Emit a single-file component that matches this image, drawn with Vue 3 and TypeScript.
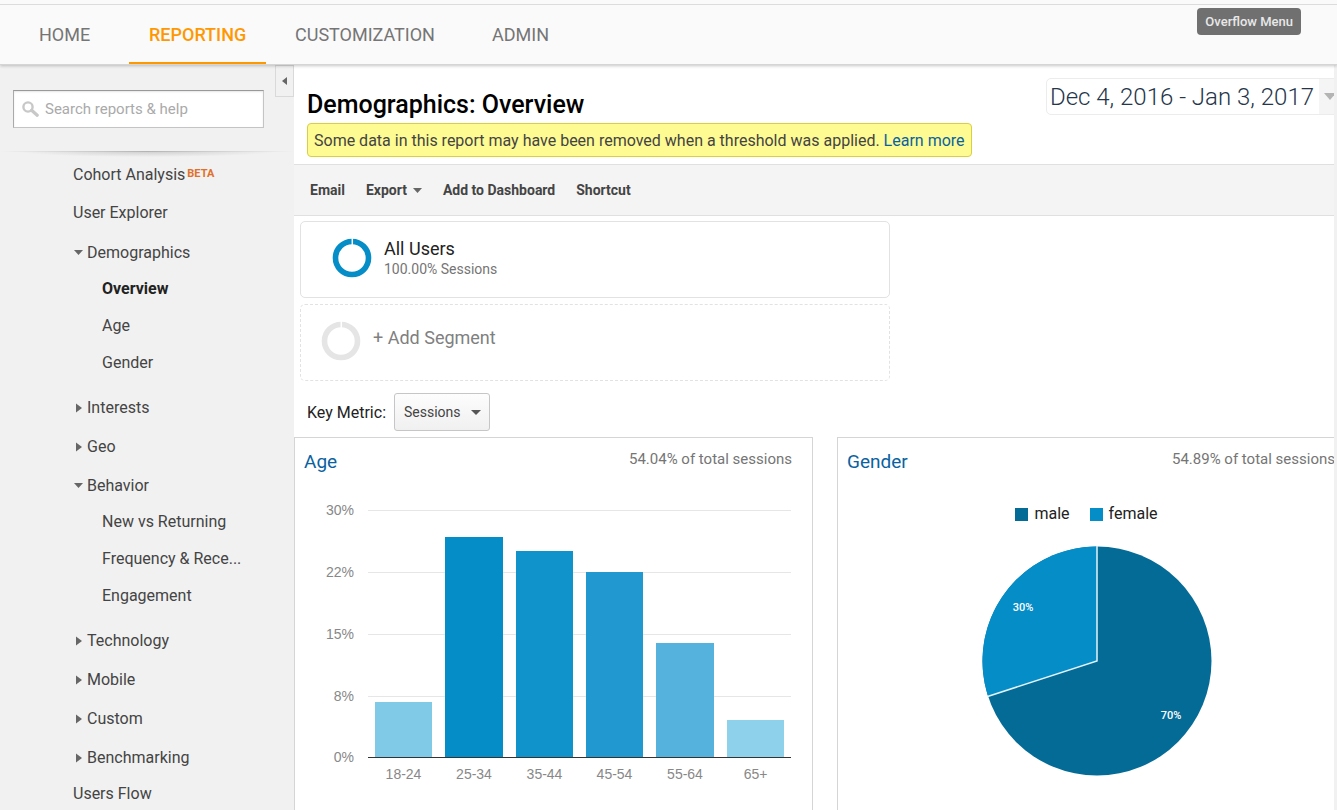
<script setup lang="ts">
import { ref } from 'vue'

interface NavItem {
  label: string
  badge?: string
  group?: boolean
  children?: string[]
}

const tabs = ['HOME', 'REPORTING', 'CUSTOMIZATION', 'ADMIN']
const activeTab = ref('REPORTING')
const activeReport = ref('Overview')
const query = ref('')
const metric = ref('Sessions')

const navItems: NavItem[] = [
  { label: 'Cohort Analysis', badge: 'BETA' },
  { label: 'User Explorer' },
  { label: 'Demographics', group: true, children: ['Overview', 'Age', 'Gender'] },
  { label: 'Interests', group: true },
  { label: 'Geo', group: true },
  { label: 'Behavior', group: true, children: ['New vs Returning', 'Frequency & Rece...', 'Engagement'] },
  { label: 'Technology', group: true },
  { label: 'Mobile', group: true },
  { label: 'Custom', group: true },
  { label: 'Benchmarking', group: true },
  { label: 'Users Flow' },
]

const ticks = [
  { label: '30%', y: 20 },
  { label: '22%', y: 82 },
  { label: '15%', y: 144 },
  { label: '8%', y: 206 },
  { label: '0%', y: 267 },
]

const bars = [
  { label: '18-24', x: 80, w: 57, top: 212, fill: '#81cae7' },
  { label: '25-34', x: 150, w: 58, top: 47, fill: '#058dc7' },
  { label: '35-44', x: 221, w: 57, top: 61, fill: '#1092cb' },
  { label: '45-54', x: 291, w: 57, top: 82, fill: '#2198cf' },
  { label: '55-64', x: 361, w: 58, top: 153, fill: '#55b2dc' },
  { label: '65+', x: 432, w: 57, top: 230, fill: '#8dd1eb' },
]
</script>

<template>
  <div class="page">
    <header class="topbar">
      <nav class="tabs">
        <a v-for="t in tabs" :key="t" href="#" class="tab" :class="{ active: t === activeTab }" @click.prevent="activeTab = t">{{ t }}</a>
      </nav>
      <span class="overflow-tip">Overflow Menu</span>
    </header>

    <div class="body">
      <aside class="sidebar">
        <button class="collapse" type="button" aria-label="Collapse navigation">
          <svg width="5" height="8" viewBox="0 0 5 8"><path d="M5 0v8L0 4z" fill="#666" /></svg>
        </button>
        <label class="search">
          <svg width="17" height="16" viewBox="0 0 17 16" aria-hidden="true">
            <circle cx="6" cy="6" r="4.6" fill="none" stroke="#c8c8c8" stroke-width="2.4" />
            <path d="M9.6 9.2l5.6 5" stroke="#c8c8c8" stroke-width="3.2" stroke-linecap="round" />
          </svg>
          <input v-model="query" type="text" placeholder="Search reports &amp; help" aria-label="Search reports &amp; help" />
        </label>
        <div class="divider"></div>
        <ul class="nav">
          <li v-for="item in navItems" :key="item.label" :class="item.group ? 'group' : 'leaf'">
            <a href="#" class="nav-link">
              <svg v-if="item.group && item.children" class="arrow" width="13" height="10" viewBox="0 0 13 10"><path d="M1 2h9L5.500 7z" fill="#666" /></svg>
              <svg v-else-if="item.group" class="arrow" width="13" height="10" viewBox="0 0 13 10"><path d="M3 0.500v9L9 5z" fill="#666" /></svg>
              <span>{{ item.label }}</span>
              <b v-if="item.badge" class="beta">{{ item.badge }}</b>
            </a>
            <ul v-if="item.children" class="sub">
              <li v-for="c in item.children" :key="c">
                <a href="#" :class="{ current: c === activeReport }" @click.prevent="activeReport = c">{{ c }}</a>
              </li>
            </ul>
          </li>
        </ul>
      </aside>

      <main class="content">
        <section class="head">
          <div class="head-text">
            <h1>Demographics: Overview</h1>
            <p class="notice">Some data in this report may have been removed when a threshold was applied. <a href="#">Learn more</a></p>
          </div>
          <button class="dates" type="button">
            <span class="range">Dec 4, 2016 - Jan 3, 2017</span>
            <span class="date-caret"><svg width="12" height="7" viewBox="0 0 12 7"><path d="M0 0h12L6 7z" fill="#b4b4b4" /></svg></span>
          </button>
        </section>

        <div class="toolbar">
          <button type="button">Email</button>
          <button type="button">Export <svg width="9" height="5" viewBox="0 0 9 5"><path d="M0 0h9L4.500 5z" fill="#666" /></svg></button>
          <button type="button">Add to Dashboard</button>
          <button type="button">Shortcut</button>
        </div>

        <section class="segments">
          <div class="segment">
            <svg width="40" height="40" viewBox="0 0 40 40">
              <circle cx="20" cy="20" r="16.500" fill="none" stroke="#058dc7" stroke-width="5.600" />
              <path d="M20.300 0v7" stroke="#fff" stroke-width="1.500" />
            </svg>
            <div>
              <div class="seg-name">All Users</div>
              <div class="seg-sub">100.00% Sessions</div>
            </div>
          </div>
          <button type="button" class="segment add">
            <svg width="40" height="40" viewBox="0 0 40 40">
              <circle cx="20" cy="20" r="16.500" fill="none" stroke="#e5e5e5" stroke-width="5.600" />
              <path d="M20.300 0v7" stroke="#fff" stroke-width="1.500" />
            </svg>
            <span class="seg-name">+ Add Segment</span>
          </button>
        </section>

        <div class="metric">
          <label for="metric">Key Metric:</label>
          <div class="select">
            <select id="metric" v-model="metric">
              <option>Sessions</option>
            </select>
            <svg width="10" height="5" viewBox="0 0 10 5"><path d="M0 0h10L5 5z" fill="#555" /></svg>
          </div>
        </div>

        <div class="cards">
          <section class="card">
            <div class="card-head">
              <h2><a href="#">Age</a></h2>
              <span>54.04% of total sessions</span>
            </div>
            <svg class="bar-chart" viewBox="0 0 517 300" role="img" aria-label="Sessions by age">
              <rect v-for="t in ticks.slice(0, 4)" :key="t.label" x="73" :y="t.y" width="423" height="1" fill="#e6e6e6" />
              <text v-for="t in ticks" :key="'l' + t.label" x="59" :y="t.y + 5" text-anchor="end">{{ t.label }}</text>
              <g v-for="b in bars" :key="b.label">
                <rect :x="b.x" :y="b.top" :width="b.w" :height="267 - b.top" :fill="b.fill" />
                <text :x="b.x + b.w / 2" y="289" text-anchor="middle">{{ b.label }}</text>
              </g>
              <rect x="73" y="267" width="423" height="1" fill="#333" />
            </svg>
          </section>

          <section class="card">
            <div class="card-head">
              <h2><a href="#">Gender</a></h2>
              <span>54.89% of total sessions</span>
            </div>
            <div class="legend">
              <span><i class="male"></i>male</span>
              <span><i class="female"></i>female</span>
            </div>
            <svg class="pie" width="230" height="230" viewBox="0 0 230 230" role="img" aria-label="Sessions by gender">
              <circle cx="115" cy="115" r="114.500" fill="#046b96" />
              <path d="M115 115V0.500A114.500 114.500 0 0 0 6.100 150.400z" fill="#058dc7" />
              <path d="M115 0V115L5.600 150.500" fill="none" stroke="#e4f3fa" stroke-width="1.500" />
              <text x="41" y="65" text-anchor="middle">30%</text>
              <text x="189" y="173" text-anchor="middle">70%</text>
            </svg>
          </section>
        </div>
      </main>
    </div>
  </div>
</template>

<style>
body {
  margin: 0;
}
</style>

<style scoped>
.page {
  display: flex;
  flex-direction: column;
  min-height: 100vh;
  background: #f1f1f1;
  font-family: Roboto, "Liberation Sans", sans-serif;
  font-size: 16px;
  color: #222;
}
.page * {
  box-sizing: border-box;
}
a {
  color: #0a62a0;
  text-decoration: none;
}
button {
  font-family: inherit;
  cursor: pointer;
}
ul {
  list-style: none;
  margin: 0;
  padding: 0;
}

.topbar {
  position: relative;
  z-index: 2;
  height: 65px;
  padding: 4px 0 0 19px;
  background: linear-gradient(#fafafa 4px, #dcdcdc 4px, #dcdcdc 5px, #fafafa 5px);
  border-bottom: 1px solid #d5d5d5;
  box-shadow: 0 1px 3px rgba(0, 0, 0, 0.22);
}
.tabs {
  display: grid;
  grid-template-columns: 110px 146px 197px auto;
  justify-content: start;
  height: 60px;
}
.tab {
  justify-self: start;
  height: 60px;
  padding: 0 20px;
  font-size: 18px;
  line-height: 62px;
  color: #757575;
}
.tab.active {
  color: #ff9800;
  font-weight: 500;
  border-bottom: 2px solid #ff9800;
}
.overflow-tip {
  position: absolute;
  top: 8px;
  right: 36px;
  padding: 0 8px;
  border-radius: 4px;
  background: #707070;
  color: #e8e8e8;
  font-size: 13px;
  font-weight: 500;
  line-height: 27px;
}

.body {
  display: flex;
  flex: 1;
}
.sidebar {
  position: relative;
  flex: 0 0 294px;
  padding-top: 25px;
  background: #f1f1f1;
}
.collapse {
  position: absolute;
  top: 0;
  right: 0;
  display: flex;
  align-items: center;
  justify-content: center;
  width: 19px;
  height: 32px;
  padding: 0;
  border: 1px solid #d9d9d9;
  background: #f1f1f1;
}
.search {
  display: flex;
  align-items: center;
  gap: 6px;
  height: 38px;
  margin: 0 30px 0 13px;
  padding: 0 8px;
  border: 1px solid #c4c4c4;
  border-top-color: #999;
  border-left-color: #aaa;
  background: #fff;
  box-shadow: inset 0 1px 2px rgba(0, 0, 0, 0.1);
}
.search input {
  flex: 1;
  min-width: 0;
  padding: 0;
  border: 0;
  outline: 0;
  background: none;
  font-family: inherit;
  font-size: 15px;
}
.search input::placeholder {
  color: #aaa;
  opacity: 1;
}
.divider {
  height: 6px;
  margin-top: 23px;
  background:
    linear-gradient(90deg, #f1f1f1, #b4b4b4 50%, #f1f1f1) top / 100% 1px no-repeat,
    radial-gradient(ellipse 45% 100% at 50% 0, #cccccc, #f1f1f1);
}
.nav a {
  display: flex;
  align-items: center;
  color: #444;
}
.leaf {
  margin-bottom: 4px;
  padding-left: 73px;
}
.leaf:last-child {
  margin: -1px 0 0;
}
.leaf .nav-link {
  height: 34px;
}
.group {
  padding-left: 73px;
}
.group .nav-link {
  height: 39px;
}
.arrow {
  margin-right: 1px;
}
.nav .beta {
  align-self: flex-start;
  margin: 9px 0 0 2px;
  color: #e0702a;
  font-size: 11px;
  line-height: 16px;
}
.sub {
  margin: -2px 0 7px;
  padding-left: 29px;
}
.sub a {
  height: 37px;
}
.sub .current {
  font-weight: 700;
  color: #222;
}

.content {
  display: flex;
  flex-direction: column;
  flex: 1;
  min-width: 0;
  margin-right: 3px;
  overflow: hidden;
  background: #fff;
}
.head {
  display: flex;
  justify-content: space-between;
  align-items: flex-start;
  height: 99px;
  padding: 13px 0 0 13px;
}
h1 {
  margin: 11px 0 2px;
  font-size: 25px;
  font-weight: 500;
  line-height: 32px;
  color: #000;
}
.notice {
  margin: 0;
  padding: 1px 6px 0;
  border: 1px solid #d9cf45;
  border-radius: 4px;
  background: #fffb93;
  color: #444;
  line-height: 31px;
  white-space: nowrap;
}
.dates {
  display: flex;
  flex: none;
  height: 37px;
  margin-right: -8px;
  padding: 0;
  border: 1px solid #ececec;
  border-radius: 5px;
  background: #fff;
}
.range {
  padding: 1px 5px 0 3px;
  font-size: 24px;
  font-weight: 300;
  line-height: 35px;
  color: #25364a;
}
.date-caret {
  display: flex;
  align-items: center;
  height: 35px;
  padding: 0 5px;
  background: #f5f5f5;
}
.toolbar {
  display: flex;
  align-items: center;
  gap: 21px;
  height: 52px;
  padding-left: 16px;
  border-top: 1px solid #e0e0e0;
  border-bottom: 1px solid #e0e0e0;
  background: #f4f4f4;
}
.toolbar button {
  display: flex;
  align-items: center;
  gap: 6px;
  padding: 0;
  border: 0;
  background: none;
  color: #444;
  font-size: 14px;
  font-weight: 700;
}
.segments {
  display: flex;
  flex-direction: column;
  gap: 6px;
  max-width: 596px;
  padding: 5px 0 12px 6px;
}
.segment {
  display: flex;
  align-items: center;
  gap: 12px;
  height: 77px;
  padding: 0 31px 3px;
  border: 1px solid #e2e2e2;
  border-radius: 5px;
  background: #fff;
  text-align: left;
}
.segment.add {
  padding: 0 20px 3px;
  border-style: dashed;
  color: #808080;
}
.seg-name {
  font-size: 18px;
  line-height: 22px;
}
.add .seg-name {
  padding-bottom: 6px;
}
.seg-sub {
  font-size: 14px;
  line-height: 18px;
  color: #757575;
}
.metric {
  display: flex;
  align-items: center;
  gap: 8px;
  padding: 0 0 6px 13px;
}
.select {
  display: flex;
  align-items: center;
}
.select select {
  width: 96px;
  height: 38px;
  padding: 0 9px;
  border: 1px solid #c6c6c6;
  border-radius: 3px;
  appearance: none;
  background: linear-gradient(#fdfdfd, #f0f0f0);
  color: #444;
  font-family: inherit;
  font-size: 14px;
}
.select svg {
  margin-left: -19px;
  pointer-events: none;
}
.cards {
  display: grid;
  grid-template-columns: 1fr 1fr;
  gap: 24px;
  flex: 1;
  margin-right: -22px;
}
.card {
  border: 1px solid #d5d5d5;
  border-bottom: 0;
}
.card-head {
  display: flex;
  justify-content: space-between;
  height: 52px;
  padding: 10px 20px 0 9px;
}
h2 {
  margin: 0;
  font-size: 19px;
  font-weight: 400;
  line-height: 28px;
}
.card-head span {
  font-size: 15px;
  line-height: 22px;
  color: #757575;
}
.bar-chart {
  display: block;
  width: 100%;
}
.bar-chart text {
  font-family: "Liberation Sans", sans-serif;
  font-size: 14px;
  fill: #888;
}
.legend {
  display: flex;
  justify-content: center;
  gap: 20px;
  padding: 12px 20px 0 0;
  line-height: 24px;
}
.legend span {
  display: flex;
  align-items: center;
  gap: 6px;
}
.legend i {
  width: 13px;
  height: 13px;
}
.male {
  background: #046b96;
}
.female {
  background: #058dc7;
}
.pie {
  display: block;
  margin: 20px auto 0;
}
.pie text {
  fill: #fff;
  font-size: 11px;
  font-weight: 500;
}
</style>
